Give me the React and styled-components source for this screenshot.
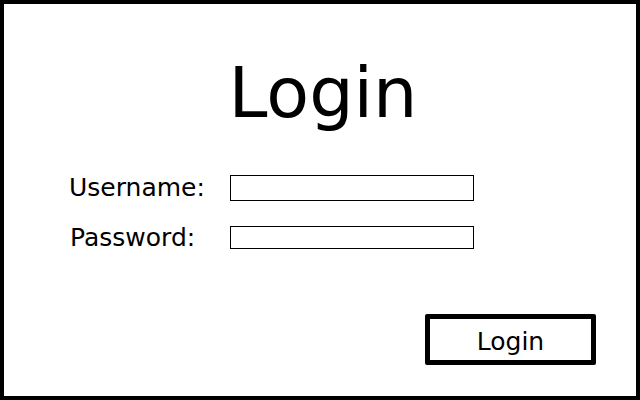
import React from 'react';
import styled, { createGlobalStyle } from 'styled-components';

const GlobalStyle = createGlobalStyle`
  html, body {
    margin: 0;
    padding: 0;
    background: #fff;
  }
  body {
    font-family: "DejaVu Sans", Verdana, sans-serif;
    color: #000;
  }
`;

const Page = styled.div`
  box-sizing: border-box;
  width: 640px;
  height: 400px;
  border: 4px solid #000;
  display: flex;
  flex-direction: column;
  padding-top: 54px;
  background: #fff;
`;

const Title = styled.h1`
  margin: 0;
  padding-left: 6px;
  font-size: 70px;
  line-height: 70px;
  font-weight: normal;
  text-align: center;
`;

const Form = styled.div`
  display: grid;
  grid-template-columns: 161px 244px;
  row-gap: 25px;
  align-items: center;
  margin-top: 47px;
  padding-left: 65px;
`;

const Label = styled.label`
  font-size: 25px;
  line-height: 22px;
  padding-left: ${(p) => p.$indent || 0}px;
`;

const Field = styled.input`
  box-sizing: border-box;
  width: 244px;
  height: ${(p) => p.$h}px;
  margin: 0;
  padding: 0 4px;
  border: 1px solid #000;
  border-radius: 0;
  outline: none;
  background: #fff;
  font-family: inherit;
  font-size: 14px;
`;

const Actions = styled.div`
  display: flex;
  justify-content: flex-end;
  margin-top: 65px;
  padding-right: 40px;
`;

const Button = styled.button`
  box-sizing: border-box;
  width: 171px;
  height: 51px;
  display: flex;
  align-items: center;
  justify-content: center;
  padding: 4px 0 0;
  border: 5px solid #000;
  border-radius: 2px;
  background: #fff;
  color: #000;
  font-family: inherit;
  font-size: 25px;
  cursor: pointer;
`;

function LoginScreen() {
  return (
    <Page>
      <Title>Login</Title>
      <Form>
        <Label htmlFor="username">Username:</Label>
        <Field id="username" type="text" $h={26} />
        <Label htmlFor="password" $indent={1}>
          Password:
        </Label>
        <Field id="password" type="password" $h={23} />
      </Form>
      <Actions>
        <Button type="button">Login</Button>
      </Actions>
    </Page>
  );
}

export default function App() {
  return (
    <>
      <GlobalStyle />
      <LoginScreen />
    </>
  );
}
